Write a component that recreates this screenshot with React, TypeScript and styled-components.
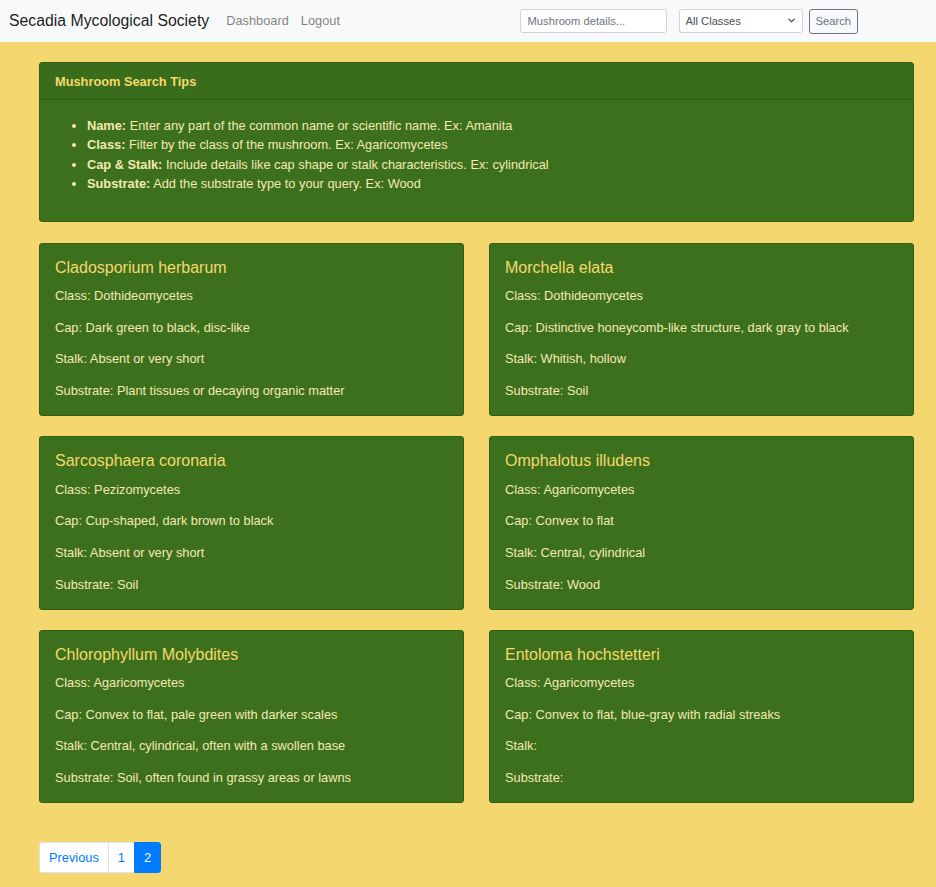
import React from "react";
import styled, { createGlobalStyle } from "styled-components";

const GlobalStyle = createGlobalStyle`
  html, body { margin: 0; padding: 0; }
  body {
    background: #f4d86f;
    font-family: "Liberation Sans", Arial, sans-serif;
    font-size: 12.8px;
    line-height: 1.5;
    color: #212529;
  }
  * { box-sizing: border-box; }
`;

const Navbar = styled.nav`
  height: 42px;
  background: #f8f9fa;
  display: flex;
  align-items: center;
  padding: 0 78px 0 9px;
`;

const Brand = styled.a`
  font-size: 15.8px;
  color: rgba(0, 0, 0, 0.9);
  margin-right: 11px;
  text-decoration: none;
  line-height: 1.5;
`;

const NavLink = styled.a`
  font-size: 12.8px;
  color: rgba(0, 0, 0, 0.5);
  padding: 0 6px;
  text-decoration: none;
`;

const SearchForm = styled.form`
  margin-left: auto;
  display: flex;
  align-items: center;
`;

const TextInput = styled.input`
  width: 147px;
  height: 24px;
  padding: 2px 7px;
  font-family: inherit;
  font-size: 11.2px;
  color: #495057;
  border: 1px solid #ced4da;
  border-radius: 3px;
  background: #fff;
  margin-right: 12px;
  outline: none;
  &::placeholder { color: #6c757d; }
`;

const SelectWrap = styled.div`
  position: relative;
  margin-right: 6px;
`;

const Select = styled.select`
  appearance: none;
  width: 124px;
  height: 24px;
  padding: 2px 20px 2px 6px;
  font-family: inherit;
  font-size: 11.2px;
  color: #495057;
  border: 1px solid #ced4da;
  border-radius: 3px;
  background: #fff;
  outline: none;
`;

const Chevron = styled.svg`
  position: absolute;
  right: 8px;
  top: 9px;
  width: 7px;
  height: 5px;
  pointer-events: none;
`;

const OutlineButton = styled.button`
  height: 25px;
  padding: 0 6px;
  font-family: inherit;
  font-size: 11.2px;
  color: #6c757d;
  background: transparent;
  border: 1px solid #6c757d;
  border-radius: 3px;
`;

const Container = styled.main`
  padding: 20px 22px 15px 39px;
`;

const TipsCard = styled.section`
  background: #3c701c;
  border: 1px solid #2f5e14;
  border-radius: 3px;
  margin-bottom: 21px;
`;

const TipsHeader = styled.div`
  padding: 8.5px 15px;
  border-bottom: 1px solid rgba(0, 0, 0, 0.125);
  background: rgba(0, 0, 0, 0.02);
`;

const TipsTitle = styled.h6`
  margin: 0;
  font-size: 12.8px;
  font-weight: 700;
  line-height: 1.5;
  color: #f6d86b;
`;

const TipsBody = styled.div`
  padding: 16px 15px 15px;
`;

const TipsList = styled.ul`
  margin: 0 0 12.8px;
  padding-left: 32px;
  color: #f5e9b4;
`;

const TipItem = styled.li`
  line-height: 19.2px;
`;

const Grid = styled.div`
  display: grid;
  grid-template-columns: 1fr 1fr;
  column-gap: 25px;
  row-gap: 20px;
`;

const Card = styled.article`
  background: #3c701c;
  border: 1px solid #2f5e14;
  border-radius: 3px;
  padding: 14px 15px 15px;
  min-height: 173px;
`;

const CardTitle = styled.h5`
  margin: 0 0 9px;
  font-size: 16px;
  font-weight: 400;
  line-height: 19.2px;
  color: #f6d86b;
`;

const Field = styled.p`
  margin: 0 0 12.5px;
  line-height: 19.2px;
  color: #f5e9b4;
  &:last-child { margin-bottom: 0; }
`;

const Pagination = styled.ul`
  display: flex;
  list-style: none;
  margin: 39px 0 0;
  padding: 0;
`;

const PageLink = styled.a<{ $active?: boolean; $first?: boolean; $last?: boolean }>`
  display: block;
  padding: 6.4px 9px;
  margin-left: ${(p) => (p.$first ? "0" : "-1px")};
  font-size: 12.8px;
  line-height: 16px;
  text-decoration: none;
  color: ${(p) => (p.$active ? "#fff" : "#007bff")};
  background: ${(p) => (p.$active ? "#007bff" : "#fff")};
  border: 1px solid ${(p) => (p.$active ? "#007bff" : "#dee2e6")};
  border-radius: ${(p) =>
    p.$first ? "3px 0 0 3px" : p.$last ? "0 3px 3px 0" : "0"};
  position: relative;
  z-index: ${(p) => (p.$active ? 1 : 0)};
`;

const tips = [
  ["Name:", "Enter any part of the common name or scientific name. Ex: Amanita"],
  ["Class:", "Filter by the class of the mushroom. Ex: Agaricomycetes"],
  ["Cap & Stalk:", "Include details like cap shape or stalk characteristics. Ex: cylindrical"],
  ["Substrate:", "Add the substrate type to your query. Ex: Wood"],
];

const mushrooms = [
  {
    name: "Cladosporium herbarum",
    cls: "Dothideomycetes",
    cap: "Dark green to black, disc-like",
    stalk: "Absent or very short",
    substrate: "Plant tissues or decaying organic matter",
  },
  {
    name: "Morchella elata",
    cls: "Dothideomycetes",
    cap: "Distinctive honeycomb-like structure, dark gray to black",
    stalk: "Whitish, hollow",
    substrate: "Soil",
  },
  {
    name: "Sarcosphaera coronaria",
    cls: "Pezizomycetes",
    cap: "Cup-shaped, dark brown to black",
    stalk: "Absent or very short",
    substrate: "Soil",
  },
  {
    name: "Omphalotus illudens",
    cls: "Agaricomycetes",
    cap: "Convex to flat",
    stalk: "Central, cylindrical",
    substrate: "Wood",
  },
  {
    name: "Chlorophyllum Molybdites",
    cls: "Agaricomycetes",
    cap: "Convex to flat, pale green with darker scales",
    stalk: "Central, cylindrical, often with a swollen base",
    substrate: "Soil, often found in grassy areas or lawns",
  },
  {
    name: "Entoloma hochstetteri",
    cls: "Agaricomycetes",
    cap: "Convex to flat, blue-gray with radial streaks",
    stalk: "",
    substrate: "",
  },
];

export default function App() {
  return (
    <>
      <GlobalStyle />
      <Navbar>
        <Brand href="#">Secadia Mycological Society</Brand>
        <NavLink href="#">Dashboard</NavLink>
        <NavLink href="#">Logout</NavLink>
        <SearchForm onSubmit={(e) => e.preventDefault()}>
          <TextInput placeholder="Mushroom details..." />
          <SelectWrap>
            <Select defaultValue="">
              <option value="">All Classes</option>
              <option>Agaricomycetes</option>
              <option>Dothideomycetes</option>
              <option>Pezizomycetes</option>
            </Select>
            <Chevron viewBox="0 0 8 5">
              <path d="M0.6 0.6 L4 4 L7.4 0.6" fill="none" stroke="#343a40" strokeWidth="1.3" />
            </Chevron>
          </SelectWrap>
          <OutlineButton type="submit">Search</OutlineButton>
        </SearchForm>
      </Navbar>
      <Container>
        <TipsCard>
          <TipsHeader>
            <TipsTitle>Mushroom Search Tips</TipsTitle>
          </TipsHeader>
          <TipsBody>
            <TipsList>
              {tips.map(([k, v]) => (
                <TipItem key={k}>
                  <strong>{k}</strong> {v}
                </TipItem>
              ))}
            </TipsList>
          </TipsBody>
        </TipsCard>
        <Grid>
          {mushrooms.map((m) => (
            <Card key={m.name}>
              <CardTitle>{m.name}</CardTitle>
              <Field>Class: {m.cls}</Field>
              <Field>Cap: {m.cap}</Field>
              <Field>Stalk: {m.stalk}</Field>
              <Field>Substrate: {m.substrate}</Field>
            </Card>
          ))}
        </Grid>
        <Pagination>
          <li>
            <PageLink href="#" $first>Previous</PageLink>
          </li>
          <li>
            <PageLink href="#">1</PageLink>
          </li>
          <li>
            <PageLink href="#" $active $last>2</PageLink>
          </li>
        </Pagination>
      </Container>
    </>
  );
}
